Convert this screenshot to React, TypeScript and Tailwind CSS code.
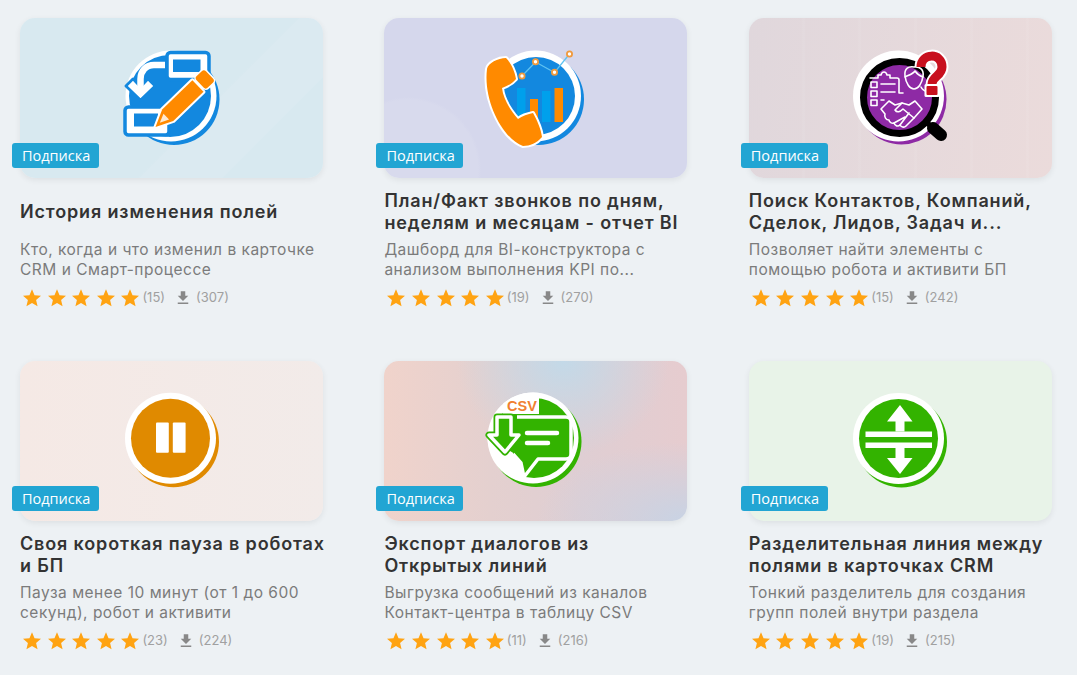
import React from "react";

const star = "M12 17.27 18.18 21l-1.64-7.03L22 9.24l-7.19-.61L12 2 9.19 8.63 2 9.24l5.46 4.73L5.82 21z";

function Disc({ color, r = 38, c = [54, 53], w = [54, 53] }: { color: string; r?: number; c?: number[]; w?: number[] }) {
  return (
    <>
      <circle cx={w[0] + 3} cy={w[1] + 3.5} r={45.5} fill={color} />
      <circle cx={w[0]} cy={w[1]} r={45.5} fill="#fff" />
      <circle cx={c[0]} cy={c[1]} r={r} fill={color} />
    </>
  );
}

function IconEdit() {
  const b = "#1388df";
  return (
    <svg width="110" height="110" viewBox="0 0 110 110">
      <Disc color={b} c={[53, 53]} r={41} />
      <path d="M23.5 57 L9 43 L16 36 L23.5 44 L31 36 L38 43 Z" fill="#fff" stroke={b} strokeWidth="3" strokeLinejoin="round" />
      <path d="M48 22 H37 C29 22 23.5 28 23.5 36 V50" fill="none" stroke="#fff" strokeWidth="6.5" />
      <path d="M23.5 55 L11 43 L16 38 L23.5 46 L31 38 L36 43 Z" fill="#fff" strokeLinejoin="round" />
      <rect x="50" y="9.5" width="42" height="27" rx="3.5" fill="#fff" stroke={b} strokeWidth="3.5" />
      <rect x="56" y="16.5" width="27.5" height="12.5" fill={b} />
      <rect x="8" y="64" width="44" height="28" rx="3.5" fill="#fff" stroke={b} strokeWidth="3.5" />
      <rect x="17" y="70.5" width="24" height="13" fill={b} />
      <g transform="translate(38.5 84) rotate(-44)">
        <path d="M0 0 L17 -8 H59 V8 H17 Z" fill="#ff8a00" stroke="#fff" strokeWidth="4" strokeLinejoin="round" paintOrder="stroke" />
        <rect x="62" y="-8" width="13" height="16" rx="3" fill="#ff8a00" stroke="#fff" strokeWidth="3" paintOrder="stroke" />
        <path d="M6 0 L15 -4 V4 Z" fill="#ffe9cf" />
      </g>
    </svg>
  );
}

function IconPhone() {
  const o = "#ff8a00";
  return (
    <svg width="110" height="110" viewBox="0 0 110 110">
      <Disc color="#1388df" c={[55, 53]} r={39} w={[54.5, 53]} />
      <path d="M41 33 L54.5 19 L73.5 29.5 L88.5 11" fill="none" stroke="#5fc3f2" strokeWidth="1.3" />
      <rect x="36" y="45" width="8.5" height="34" fill="#00a0ec" />
      <rect x="49" y="56" width="8" height="23" fill={o} />
      <rect x="61" y="48" width="8.5" height="31" fill="#00a0ec" />
      <rect x="73.5" y="45" width="8.5" height="34" fill={o} />
      {[[41, 33], [54.5, 18.7], [73.5, 29.3], [88.5, 11]].map(([x, y], i) => (
        <circle key={i} cx={x} cy={y} r="2.6" fill="#fff" stroke="#f09a3e" strokeWidth="1.8" />
      ))}
      <path d="M6 26 C7 20 17 15 25 15 C30 20 34 29 35 36 C31 41 26 43 21 45 C22 55 29 67 37 76 C41 73 47 71 52 70 C56 77 60 86 61 94 C56 100 49 103 42 103 C22 96 2 58 6 26 Z" fill={o} stroke="#fff" strokeWidth="4" strokeLinejoin="round" paintOrder="stroke" />
    </svg>
  );
}

function IconSearch() {
  return (
    <svg width="110" height="110" viewBox="0 0 110 110">
      <circle cx="56.5" cy="56.5" r="45" fill="#8e2aa5" />
      <circle cx="53.5" cy="53" r="45.5" fill="#fff" />
      <circle cx="54.5" cy="54.5" r="36" fill="#8e2aa5" stroke="#000" strokeWidth="7" />
      <path d="M80 78 L88 85" stroke="#000" strokeWidth="5" />
      <path d="M88 85 L96 92" stroke="#000" strokeWidth="12" strokeLinecap="round" />
      <g fill="none" stroke="#fff" strokeWidth="1.6" strokeLinejoin="round" strokeLinecap="round">
        <path d="M25 35 H33 V32 H36 C37 28 41 28 42 32 H45 V35 H52 C54 35 54 36 54 37 V50 H58" />
        <rect x="26" y="39" width="6" height="5.5" />
        <rect x="26" y="48" width="6" height="5.5" />
        <rect x="26" y="57" width="6" height="5.5" />
        <path d="M36 41 H50 M36 49 H50 M36 57 H39" />
        <path d="M60 33 C59 25 64 23 69 24 C75 23 79 27 78 33 C77 41 73 46 69 46 C65 46 61 41 60 33 Z" />
        <path d="M60 34 C64 32 68 31 70 28 C72 31 75 33 78 34" />
        <path d="M76 44 C78 48 82 49 84 50" />
        <path d="M36 66 L44 58 L50 62 L57 60 L64 62 L70 58 L77 66 L69 75 L61 83 C59 85 56 84 55 82 C53 84 50 83 49 80 C47 81 44 79 44 77 C41 77 39 74 40 71 Z" />
        <path d="M57 60 L50 67 C52 70 55 69 58 66 L69 75 M64 70 L55 82 M60 74 L49 80" />
      </g>
      <path d="M76 24 C76 10 97 9 97 24 C97 33 87 33 87 42" fill="none" stroke="#fff" strokeWidth="13" />
      <rect x="79.5" y="41" width="15" height="13" rx="1.5" fill="#fff" />
      <path d="M76 24 C76 10 97 9 97 24 C97 33 87 33 87 41" fill="none" stroke="#c8101e" strokeWidth="9" />
      <rect x="81.5" y="43" width="11" height="9" rx="1" fill="#c8101e" />
    </svg>
  );
}

function IconPause() {
  return (
    <svg width="110" height="110" viewBox="0 0 110 110">
      <Disc color="#e08a00" c={[53.5, 52.3]} r={39.5} w={[53.5, 52.3]} />
      <rect x="39" y="36.5" width="12.8" height="30.3" rx="1" fill="#fff" />
      <rect x="55.8" y="36.5" width="12.8" height="30.3" rx="1" fill="#fff" />
    </svg>
  );
}

function IconCsv() {
  const g = "#33b300";
  const arrow = "M16 31 H30 V49 H38 L24 66 L8 49 H16 Z";
  return (
    <svg width="110" height="110" viewBox="0 0 110 110">
      <defs>
        <clipPath id="csv-disc">
          <circle cx="52" cy="52" r="45.5" />
        </clipPath>
      </defs>
      <Disc color={g} c={[53, 52]} r={40} w={[52, 52]} />
      <rect x="22" y="5" width="36" height="23" fill="#fff" clipPath="url(#csv-disc)" />
      <path d="M5 50 L34 68 L40 77 L44 94 C30 90 15 75 8 62 Z" fill="#fff" clipPath="url(#csv-disc)" />
      <path d="M36 31 H85 C88 31 90 33 90 36 V68 C90 71 88 73 85 73 H57 L43 91 L40 77 L32 68" fill={g} stroke="#fff" strokeWidth="3.5" strokeLinejoin="round" />
      <path d="M46 47 H76 M46 57 H67" stroke="#fff" strokeWidth="4.5" strokeLinecap="round" />
      <path d={arrow} fill={g} stroke={g} strokeWidth="7" strokeLinejoin="round" />
      <path d={arrow} fill={g} stroke="#fff" strokeWidth="3.5" strokeLinejoin="round" />
      <text x="26" y="25" fill="#f08030" fontFamily="'Liberation Sans', sans-serif" fontWeight="700" fontSize="14.5">CSV</text>
    </svg>
  );
}

function IconSplit() {
  const g = "#33b300";
  return (
    <svg width="110" height="110" viewBox="0 0 110 110">
      <Disc color={g} c={[53.5, 52.5]} r={39.5} w={[53.5, 52.5]} />
      <rect x="20.5" y="45.5" width="66.5" height="5.5" fill="#fff" />
      <rect x="20.5" y="56.5" width="66.5" height="5.5" fill="#fff" />
      <path d="M55 19 L67.5 35.5 H59.5 V45.5 H50.5 V35.5 H42 Z" fill="#fff" />
      <path d="M55 88 L67.5 72 H59.5 V62 H50.5 V72 H42 Z" fill="#fff" />
    </svg>
  );
}

type Item = {
  bg: string;
  icon: React.ReactNode;
  title: string[];
  desc: string[];
  stars: string;
  dl: string;
};

const items: Item[] = [
  {
    bg: "bg-[linear-gradient(135deg,#d8e9f0_0%,#d8e9f0_60%,#dbeaf1_60.5%,#dbeaf1_78%,#d8e9f0_78.5%)]",
    icon: <IconEdit />,
    title: ["История изменения полей"],
    desc: ["Кто, когда и что изменил в карточке", "CRM и Смарт-процессе"],
    stars: "(15)",
    dl: "(307)",
  },
  {
    bg: "bg-[radial-gradient(circle_at_8%_95%,#d8daed_0,#d8daed_22%,#d5d7ec_23%)]",
    icon: <IconPhone />,
    title: ["План/Факт звонков по дням,", "неделям и месяцам - отчет BI"],
    desc: ["Дашборд для BI-конструктора с", "анализом выполнения KPI по..."],
    stars: "(19)",
    dl: "(270)",
  },
  {
    bg: "bg-[repeating-linear-gradient(90deg,transparent_0,transparent_53px,rgba(255,255,255,0.05)_53px,rgba(255,255,255,0.05)_56px),linear-gradient(100deg,#e0d7dc,#ebdbdb)]",
    icon: <IconSearch />,
    title: ["Поиск Контактов, Компаний,", "Сделок, Лидов, Задач и..."],
    desc: ["Позволяет найти элементы с", "помощью робота и активити БП"],
    stars: "(15)",
    dl: "(242)",
  },
  {
    bg: "bg-gradient-to-r from-[#f5e9e5] to-[#f2ebe9]",
    icon: <IconPause />,
    title: ["Своя короткая пауза в роботах", "и БП"],
    desc: ["Пауза менее 10 минут (от 1 до 600", "секунд), робот и активити"],
    stars: "(23)",
    dl: "(224)",
  },
  {
    bg: "bg-[radial-gradient(ellipse_at_59%_0%,#c3d9e8_0%,transparent_42%),radial-gradient(ellipse_at_100%_100%,#c8d3e4_0%,transparent_35%),linear-gradient(90deg,#f0d3cb,#e4d0cf_35%,#dfced3_65%,#e6cccf)]",
    icon: <IconCsv />,
    title: ["Экспорт диалогов из", "Открытых линий"],
    desc: ["Выгрузка сообщений из каналов", "Контакт-центра в таблицу CSV"],
    stars: "(11)",
    dl: "(216)",
  },
  {
    bg: "bg-[#e8f3e8]",
    icon: <IconSplit />,
    title: ["Разделительная линия между", "полями в карточках CRM"],
    desc: ["Тонкий разделитель для создания", "групп полей внутри раздела"],
    stars: "(19)",
    dl: "(215)",
  },
];

function Card({ it }: { it: Item }) {
  return (
    <div className="w-[303px] h-[343px] flex flex-col">
      <div className={`relative h-[160px] rounded-[15px] flex items-center justify-center shadow-[0_2px_6px_rgba(0,0,0,0.07)] ${it.bg}`}>
        {it.icon}
        <div className="absolute left-[-8px] bottom-[10px] h-[25px] w-[87px] rounded-[3px] bg-[#22a5d3] text-white text-[14.5px] leading-[25px] pl-[10px] font-['Open_Sans',sans-serif]">
          Подписка
        </div>
      </div>
      <div className="h-[46px] mt-[11px] flex flex-col justify-center text-[18px] leading-[22px] font-semibold text-[#333] tracking-[0.85px] whitespace-nowrap">
        {it.title.map((l) => (
          <div key={l}>{l}</div>
        ))}
      </div>
      <div className="mt-[5px] text-[15.5px] leading-[20px] text-[#7b7b7b] tracking-[0.5px] whitespace-nowrap">
        {it.desc.map((l) => (
          <div key={l}>{l}</div>
        ))}
      </div>
      <div className="mt-[8px] pl-[3px] flex items-center h-[20px] text-[13px] text-[#a0a0a0]">
        <div className="flex gap-[6.6px]">
          {[0, 1, 2, 3, 4].map((i) => (
            <svg key={i} width="18" height="18" viewBox="2 2 20 19.5" fill="#ffa312">
              <path d={star} />
            </svg>
          ))}
        </div>
        <span className="ml-[3px]">{it.stars}</span>
        <svg className="ml-[9px]" width="18" height="18" viewBox="0 0 24 24" fill="#888">
          <path d="M19 9h-4V3H9v6H5l7 7 7-7zM5 18v2h14v-2H5z" />
        </svg>
        <span className="ml-[4px]">{it.dl}</span>
      </div>
    </div>
  );
}

export default function App() {
  return (
    <div className="h-[675px] w-[1077px] overflow-hidden bg-[#edf1f4] pt-[18px] pl-[20px] font-['Inter',sans-serif]">
      <div className="grid grid-cols-[303px_303px_303px] gap-x-[61.4px]">
        {items.map((it) => (
          <Card key={it.title[0]} it={it} />
        ))}
      </div>
    </div>
  );
}
